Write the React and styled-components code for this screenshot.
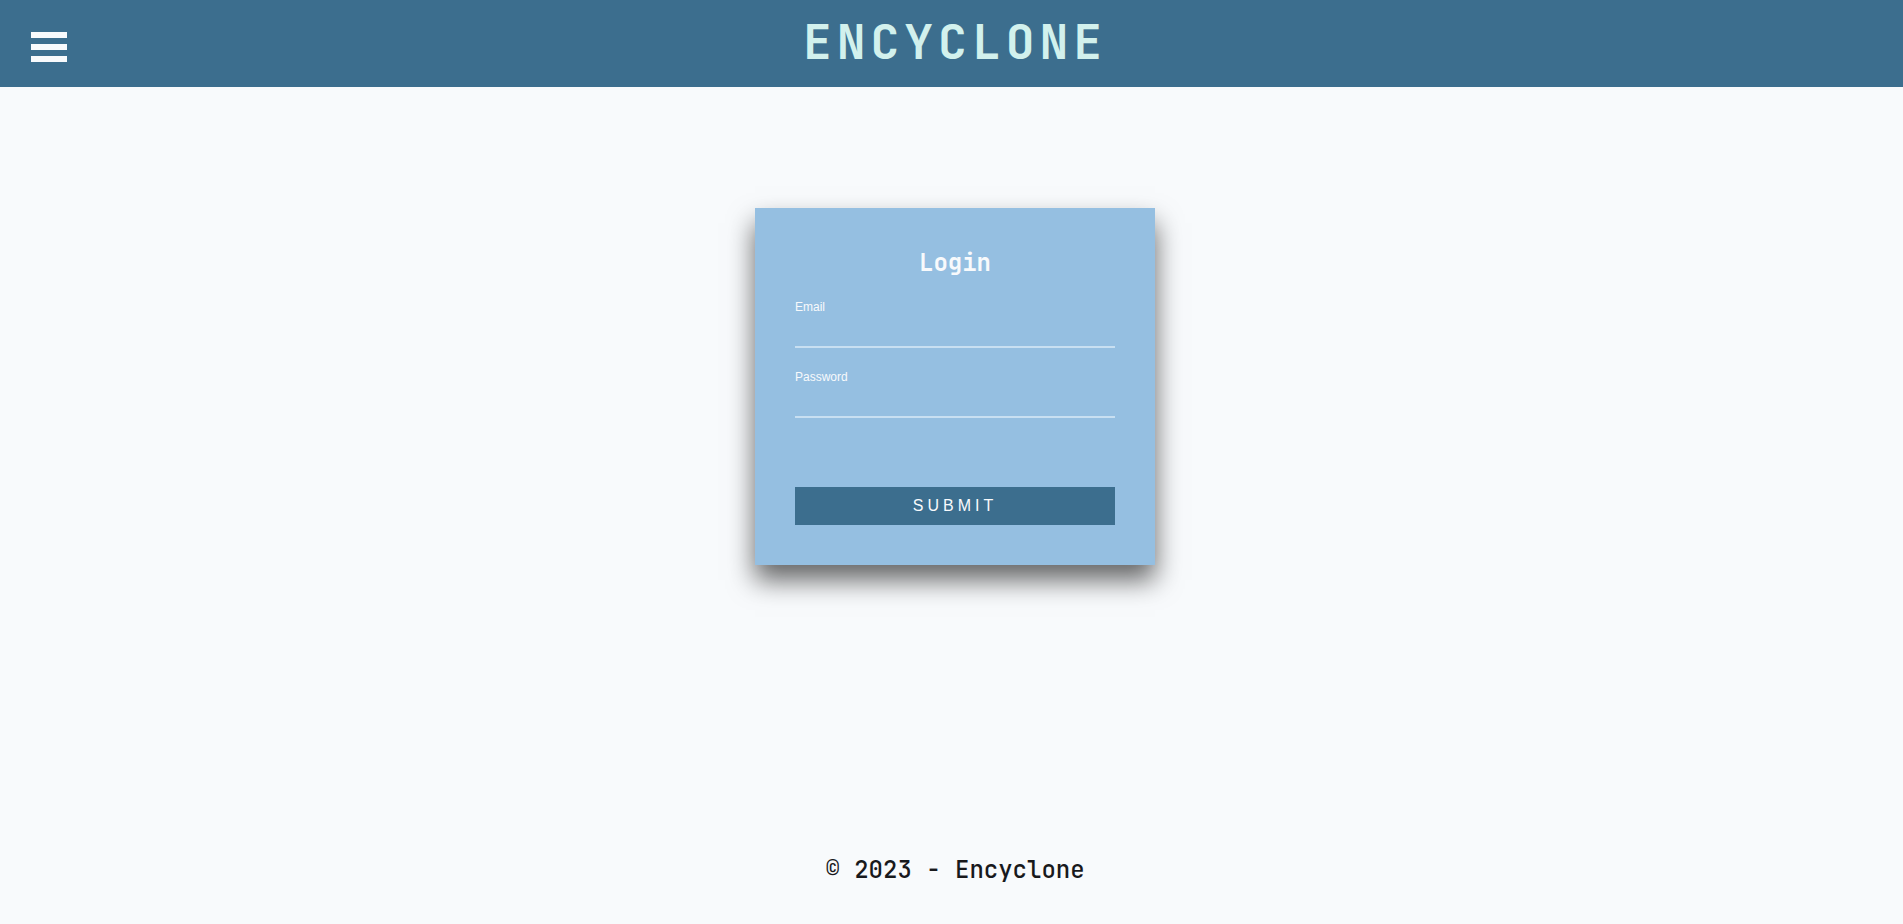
import React from "react";
import styled, { createGlobalStyle } from "styled-components";

const mono = '"JetBrains Mono", "DejaVu Sans Mono", monospace';
const sans = '"Liberation Sans", Arial, sans-serif';

const GlobalStyle = createGlobalStyle`
  *, *::before, *::after { box-sizing: border-box; }
  body {
    margin: 0;
    background: #f8fafc;
    color: #18191c;
    font-family: ${sans};
  }
`;

const Page = styled.div`
  display: flex;
  flex-direction: column;
  min-height: 100vh;
`;

const Header = styled.header`
  display: grid;
  grid-template-columns: 1fr auto 1fr;
  align-items: center;
  padding: 10px 24px 14px 31px;
  background: #3c6e8e;
`;

const MenuButton = styled.button`
  display: flex;
  flex-direction: column;
  gap: 6px;
  width: 36px;
  margin-top: 10px;
  padding: 0;
  border: 0;
  background: none;
  cursor: pointer;
`;

const Bar = styled.span`
  height: 6px;
  background: #f8fafc;
`;

const Brand = styled.h1`
  margin: 0;
  color: #d2f1ed;
  font: 700 48px/63px ${mono};
  letter-spacing: 5px;
`;

const Main = styled.main`
  flex: 1;
  display: flex;
  justify-content: center;
  align-items: flex-start;
  padding: 121px 0 48px 7px;
`;

const Card = styled.form`
  display: flex;
  flex-direction: column;
  width: 400px;
  max-width: 100%;
  padding: 40px;
  background: #95bfe1;
  box-shadow: 0 15px 25px rgba(0, 0, 0, 0.6);
  color: #f8fafc;
`;

const CardTitle = styled.h2`
  margin: 0 0 14px;
  font: 700 24px/30px ${mono};
  text-align: center;
`;

const Field = styled.div`
  display: flex;
  flex-direction: column;
  margin-bottom: 14px;
`;

const Label = styled.label`
  padding-top: 8px;
  font-size: 12px;
  line-height: 14px;
`;

const Input = styled.input`
  width: 100%;
  height: 34px;
  padding: 0;
  border: 0;
  border-bottom: 2px solid #c8dff1;
  outline: 0;
  background: transparent;
  color: #f8fafc;
  font: 16px/24px ${sans};
`;

const SubmitButton = styled.button`
  margin-top: 55px;
  padding: 8px;
  border: 0;
  background: #3c6e8e;
  color: #f8fafc;
  font: 16px/22px ${sans};
  letter-spacing: 4px;
  text-transform: uppercase;
  cursor: pointer;
`;

const Footer = styled.footer`
  padding: 0 0 38px 7px;
  font: 500 24px/32px ${mono};
  text-align: center;
`;

const CopyrightSign = styled.span`
  font-weight: 400;
`;

export default function App() {
  return (
    <Page>
      <GlobalStyle />
      <Header>
        <MenuButton type="button" aria-label="Menu">
          <Bar />
          <Bar />
          <Bar />
        </MenuButton>
        <Brand>ENCYCLONE</Brand>
      </Header>
      <Main>
        <Card onSubmit={(event) => event.preventDefault()}>
          <CardTitle>Login</CardTitle>
          <Field>
            <Label htmlFor="email">Email</Label>
            <Input id="email" type="email" name="email" />
          </Field>
          <Field>
            <Label htmlFor="password">Password</Label>
            <Input id="password" type="password" name="password" />
          </Field>
          <SubmitButton type="submit">Submit</SubmitButton>
        </Card>
      </Main>
      <Footer>
        <CopyrightSign>©</CopyrightSign> 2023 - Encyclone
      </Footer>
    </Page>
  );
}
